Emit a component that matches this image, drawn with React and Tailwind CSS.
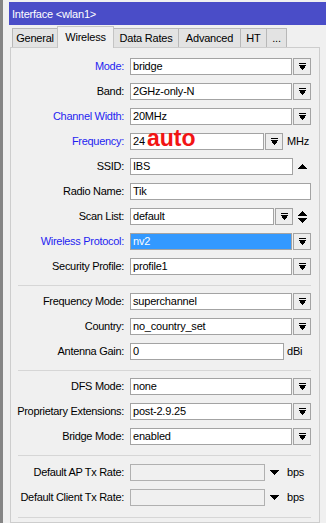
import React from "react";

function DropIcon() {
  return (
    <svg width="7" height="7" viewBox="0 0 7 7" shapeRendering="crispEdges" fill="#000">
      <rect x="0" y="0" width="7" height="1" />
      <rect x="0" y="2" width="7" height="1" />
      <rect x="1" y="3" width="5" height="1" />
      <rect x="1" y="4" width="5" height="1" />
      <rect x="2" y="5" width="3" height="1" />
      <rect x="3" y="6" width="1" height="1" />
    </svg>
  );
}

function UpTri() {
  return (
    <svg width="9" height="5" viewBox="0 0 9 5" shapeRendering="crispEdges" fill="#000">
      <rect x="4" y="0" width="1" height="1" />
      <rect x="3" y="1" width="3" height="1" />
      <rect x="2" y="2" width="5" height="1" />
      <rect x="1" y="3" width="7" height="1" />
      <rect x="0" y="4" width="9" height="1" />
    </svg>
  );
}

function DownTri() {
  return (
    <svg width="9" height="5" viewBox="0 0 9 5" shapeRendering="crispEdges" fill="#000">
      <rect x="0" y="0" width="9" height="1" />
      <rect x="1" y="1" width="7" height="1" />
      <rect x="2" y="2" width="5" height="1" />
      <rect x="3" y="3" width="3" height="1" />
      <rect x="4" y="4" width="1" height="1" />
    </svg>
  );
}

function Row({ label, blue, children }) {
  return (
    <div className="flex items-center h-[25px]">
      <div
        className={
          blue
            ? "w-[113px] text-right text-[#1f1ff0] whitespace-nowrap tracking-[-0.3px]"
            : "w-[113px] text-right text-black whitespace-nowrap tracking-[-0.3px]"
        }
      >
        {label}:
      </div>
      <div className="ml-[6px] flex items-center">{children}</div>
    </div>
  );
}

function DropBtn() {
  return (
    <div className="ml-[1px] h-[17px] w-[18px] border border-[#a3a3a3] bg-[#ededed] flex items-center justify-center">
      <DropIcon />
    </div>
  );
}

function Sep() {
  return (
    <div className="h-[10px] pt-[6px] pl-[7px]">
      <div className="h-px w-[293px] bg-[#d6d6d6]" />
    </div>
  );
}

const field =
  "h-[17px] border border-[#a3a3a3] bg-white pl-[2px] flex items-center whitespace-nowrap overflow-hidden";

export default function App() {
  return (
    <div className="w-[326px] h-[523px] bg-[#f0f0f0] flex overflow-hidden font-['Liberation_Sans',Arial,sans-serif] text-[11px] leading-none tracking-[-0.2px] text-black">
      <div className="w-[3px] h-full bg-[#858585]" />
      <div className="flex-1 flex flex-col">
        <div className="mt-[2px] ml-[6px] h-[23px] bg-[#4a4dc8] text-white flex items-center pl-[3px] pt-[2px]">
          Interface &lt;wlan1&gt;
        </div>
        <div className="relative z-10 mt-[1px] h-[22px] pl-[9px] flex items-end">
          <div className="mb-[1px] h-[19px] w-[46px] border-t border-l border-r border-[#b8b8b8] bg-[#e3e3e3] flex items-center justify-center pt-[1px]">
            General
          </div>
          <div className="relative z-10 -ml-px h-[22px] w-[57px] border-t border-l border-r border-[#c4c4c4] bg-[#f0f0f0] flex items-center justify-center pb-[1px]">
            Wireless
          </div>
          <div className="-ml-px mb-[1px] h-[19px] w-[66px] border-t border-l border-r border-[#b8b8b8] bg-[#e3e3e3] flex items-center justify-center pt-[1px]">
            Data Rates
          </div>
          <div className="-ml-px mb-[1px] h-[19px] w-[63px] border-t border-l border-r border-[#b8b8b8] bg-[#e3e3e3] flex items-center justify-center pt-[1px]">
            Advanced
          </div>
          <div className="-ml-px mb-[1px] h-[19px] w-[27px] border-t border-l border-r border-[#b8b8b8] bg-[#e3e3e3] flex items-center justify-center pt-[1px]">
            HT
          </div>
          <div className="-ml-px mb-[1px] h-[19px] w-[21px] border-t border-l border-r border-[#b8b8b8] bg-[#e3e3e3] flex items-center justify-center pt-[1px]">
            ...
          </div>
        </div>
        <div className="-mt-px ml-[7px] w-[310px] flex-1 border border-[#cdcdcd] bg-[#f0f0f0] pt-[6px]">
          <Row label="Mode" blue>
            <div className={`${field} w-[162px]`}>bridge</div>
            <DropBtn />
          </Row>
          <Row label="Band">
            <div className={`${field} w-[162px]`}>2GHz-only-N</div>
            <DropBtn />
          </Row>
          <Row label="Channel Width" blue>
            <div className={`${field} w-[162px]`}>20MHz</div>
            <DropBtn />
          </Row>
          <Row label="Frequency" blue>
            <div className="relative h-[17px] w-[134px] border border-[#a3a3a3] bg-white pl-[2px] flex items-center whitespace-nowrap">
              24
              <span className="absolute left-[16px] top-[-7px] text-[23px] leading-[23px] font-bold tracking-normal text-[#f21414]">
                auto
              </span>
            </div>
            <DropBtn />
            <span className="ml-[4px]">MHz</span>
          </Row>
          <Row label="SSID">
            <div className={`${field} w-[163px]`}>IBS</div>
            <div className="ml-[5px] flex items-center">
              <UpTri />
            </div>
          </Row>
          <Row label="Radio Name">
            <div className={`${field} w-[181px]`}>Tik</div>
          </Row>
          <Row label="Scan List">
            <div className={`${field} w-[144px]`}>default</div>
            <DropBtn />
            <div className="ml-[5px] flex flex-col gap-[2px]">
              <UpTri />
              <DownTri />
            </div>
          </Row>
          <Row label="Wireless Protocol" blue>
            <div className="h-[17px] w-[162px] border border-[#a3a3a3] bg-[#3399ff] text-white pl-[2px] flex items-center">
              nv2
            </div>
            <DropBtn />
          </Row>
          <Row label="Security Profile">
            <div className={`${field} w-[162px]`}>profile1</div>
            <DropBtn />
          </Row>
          <Sep />
          <Row label="Frequency Mode">
            <div className={`${field} w-[162px]`}>superchannel</div>
            <DropBtn />
          </Row>
          <Row label="Country">
            <div className={`${field} w-[162px]`}>no_country_set</div>
            <DropBtn />
          </Row>
          <Row label="Antenna Gain">
            <div className={`${field} w-[154px]`}>0</div>
            <span className="ml-[3px]">dBi</span>
          </Row>
          <Sep />
          <Row label="DFS Mode">
            <div className={`${field} w-[162px]`}>none</div>
            <DropBtn />
          </Row>
          <Row label="Proprietary Extensions">
            <div className={`${field} w-[162px]`}>post-2.9.25</div>
            <DropBtn />
          </Row>
          <Row label="Bridge Mode">
            <div className={`${field} w-[162px]`}>enabled</div>
            <DropBtn />
          </Row>
          <div className="h-[11px] pt-[6px] pl-[7px]">
            <div className="h-px w-[293px] bg-[#d6d6d6]" />
          </div>
          <Row label="Default AP Tx Rate">
            <div className="h-[17px] w-[135px] border border-[#b0b0b0] bg-[#f0f0f0]" />
            <div className="ml-[5px] flex items-center">
              <DownTri />
            </div>
            <span className="ml-[8px]">bps</span>
          </Row>
          <Row label="Default Client Tx Rate">
            <div className="h-[17px] w-[135px] border border-[#b0b0b0] bg-[#f0f0f0]" />
            <div className="ml-[5px] flex items-center">
              <DownTri />
            </div>
            <span className="ml-[8px]">bps</span>
          </Row>
          <div className="h-[10px] pt-[7px] pl-[7px]">
            <div className="h-px w-[293px] bg-[#d6d6d6]" />
          </div>
        </div>
      </div>
    </div>
  );
}
